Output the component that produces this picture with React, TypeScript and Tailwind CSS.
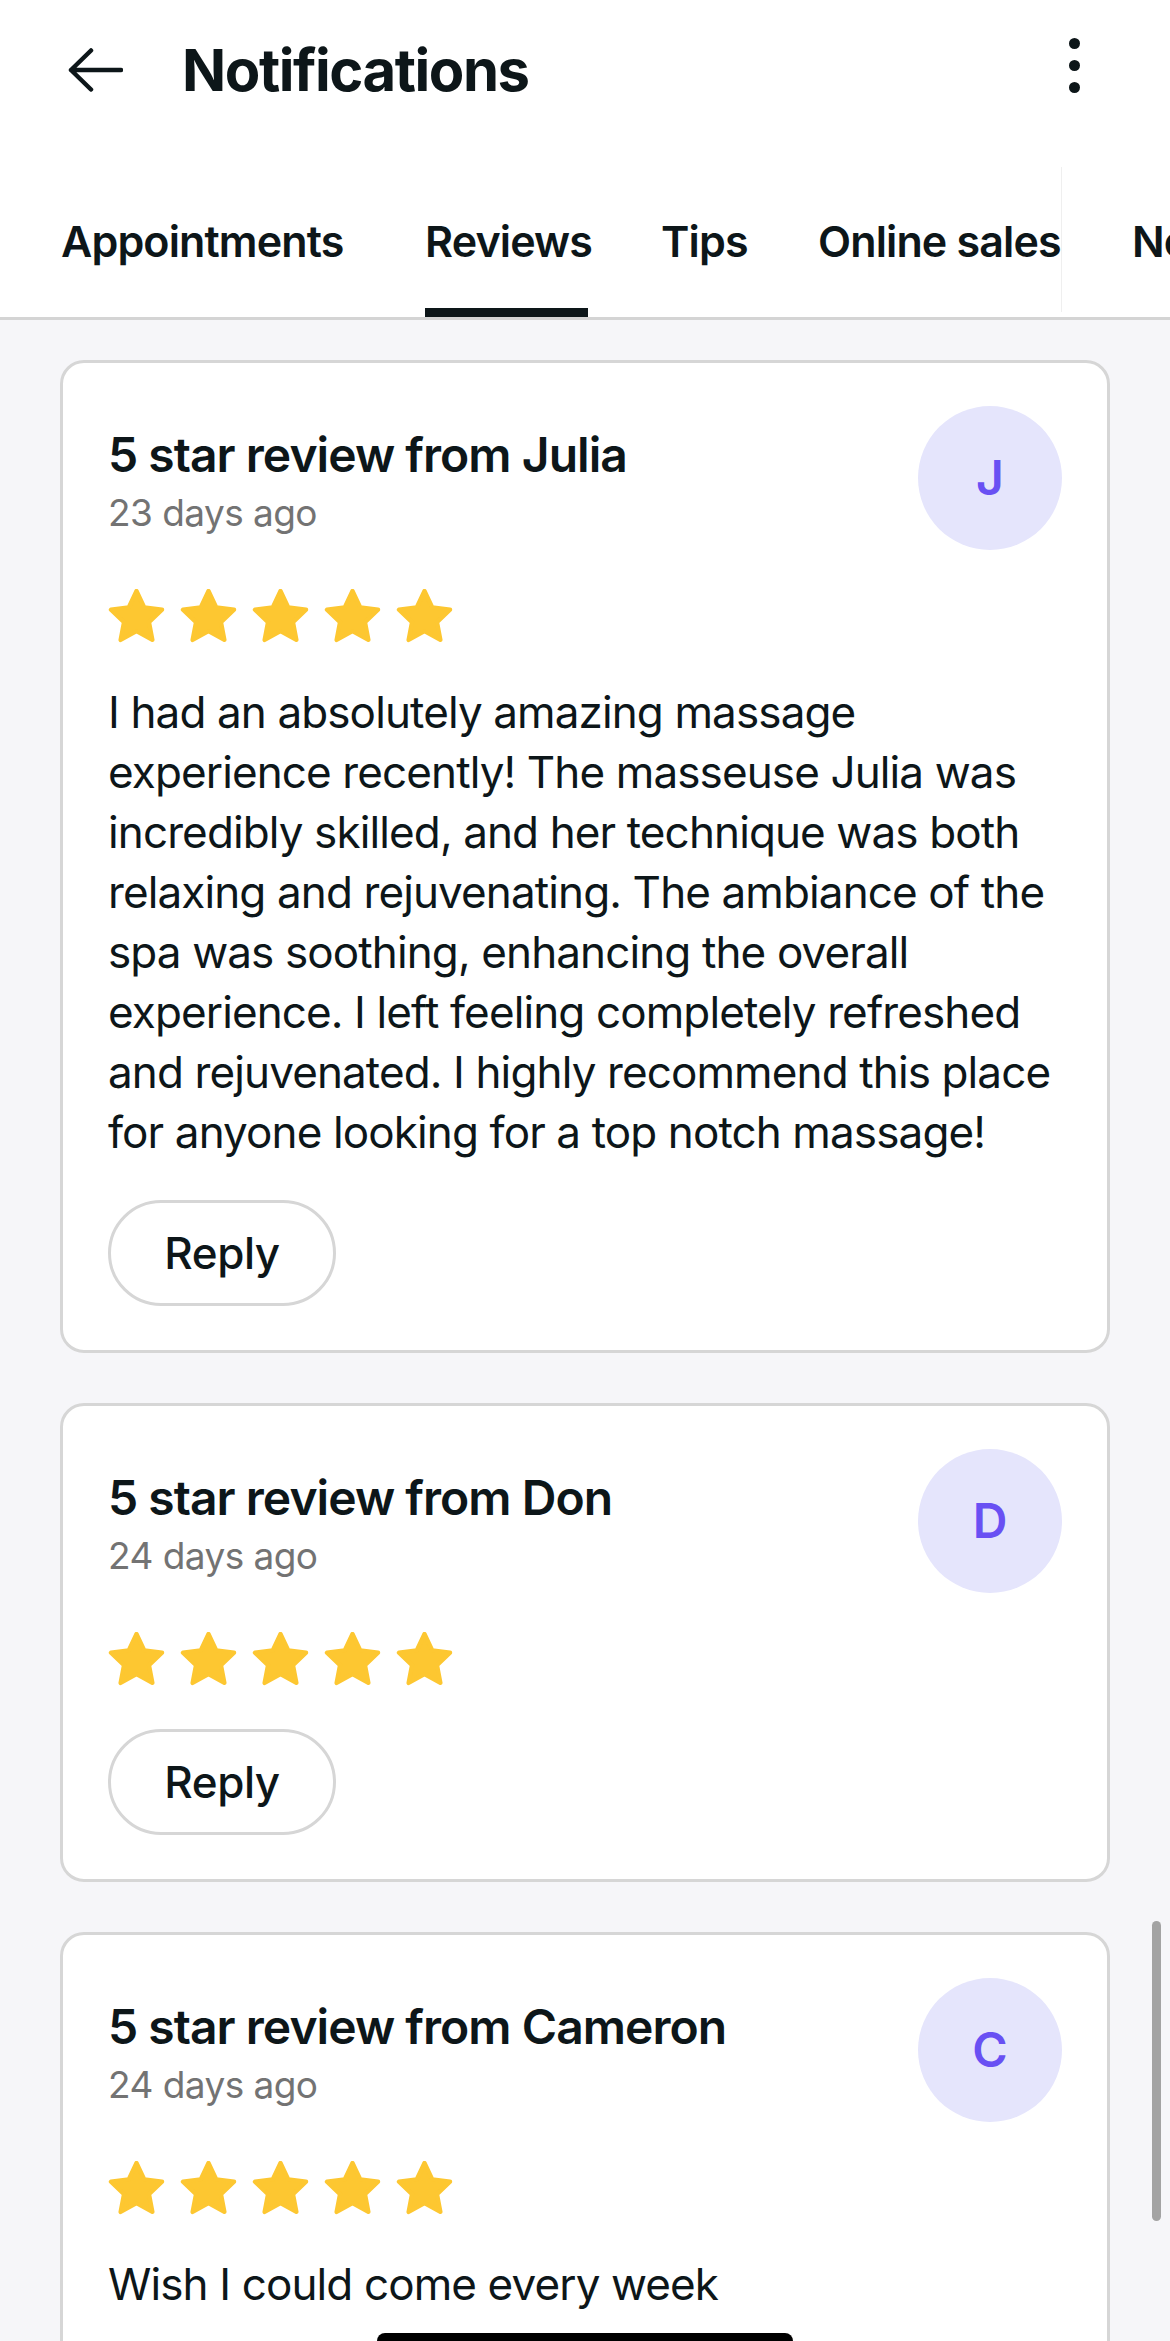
import { ReactNode } from "react";

interface Review {
  name: string;
  initial: string;
  ago: string;
  lines?: string[];
}

const reviews: Review[] = [
  {
    name: "Julia",
    initial: "J",
    ago: "23 days ago",
    lines: [
      "I had an absolutely amazing massage",
      "experience recently! The masseuse Julia was",
      "incredibly skilled, and her technique was both",
      "relaxing and rejuvenating. The ambiance of the",
      "spa was soothing, enhancing the overall",
      "experience. I left feeling completely refreshed",
      "and rejuvenated. I highly recommend this place",
      "for anyone looking for a top notch massage!",
    ],
  },
  { name: "Don", initial: "D", ago: "24 days ago" },
  {
    name: "Cameron",
    initial: "C",
    ago: "24 days ago",
    lines: ["Wish I could come every week"],
  },
];

const tabs = [
  { label: "Appointments", width: "w-[291px]" },
  { label: "Reviews", width: "w-[163px]", active: true },
  { label: "Tips", width: "w-[84px]" },
  { label: "Online sales", width: "w-[241px]" },
  { label: "Notes", width: "w-[140px]" },
];

const Star = () => (
  <svg viewBox="1.5 1.9 21 19.8" className="h-[54px] w-[57px]">
    <path
      d="M12 2.6l2.85 6.05 6.55.85-4.8 4.55 1.25 6.55L12 17.4l-5.85 3.2 1.25-6.55-4.8-4.55 6.55-.85z"
      fill="#fdc731"
      stroke="#fdc731"
      strokeWidth="1.6"
      strokeLinejoin="round"
    />
  </svg>
);

const Card = ({ review, children }: { review: Review; children?: ReactNode }) => (
  <div className="rounded-[24px] border-[3px] border-[#d6d6d6] bg-white px-[45px] pt-[43px] pb-[44px]">
    <div className="flex items-start justify-between">
      <div className="mt-[20px] flex flex-col">
        <div className="text-[48px] font-semibold leading-[58px] tracking-[-0.02em]">
          5 star review from {review.name}
        </div>
        <div className="mt-[6px] text-[37px] leading-[46px] tracking-[-0.015em] text-[#737373]">
          {review.ago}
        </div>
      </div>
      <div className="flex h-[144px] w-[144px] items-center justify-center rounded-full bg-[#e5e5fc] text-[48px] font-semibold text-[#6950f3]">
        {review.initial}
      </div>
    </div>

    <div className="mt-[39px] flex gap-[15px]">
      {[0, 1, 2, 3, 4].map((i) => (
        <Star key={i} />
      ))}
    </div>

    {review.lines && (
      <p className="mt-[39px] text-[44px] leading-[60px] tracking-[-0.02em]">
        {review.lines.map((line, i) => (
          <span key={i} className="block">
            {line}
          </span>
        ))}
      </p>
    )}

    <button
      className={`${review.lines ? "mt-[38px]" : "mt-[43px]"} flex h-[106px] w-[228px] items-center justify-center rounded-full border-[3px] border-[#d6d6d6] text-[44px] font-medium tracking-[-0.01em]`}
    >
      Reply
    </button>
    {children}
  </div>
);

export default function App() {
  return (
    <div className="relative h-[2341px] w-[1170px] overflow-hidden bg-[#f6f6f9] font-['Inter',_'Roboto',_sans-serif] text-[#0d1619]">
      <header className="bg-white">
        <div className="flex h-[140px] items-center pl-[68px] pr-[90px]">
          <svg viewBox="0 0 55 44" className="h-[44px] w-[55px]" fill="none">
            <path
              d="M53 22H3M23 2.5L3 22l20 19.5"
              stroke="#0d1619"
              strokeWidth="4.5"
              strokeLinecap="round"
              strokeLinejoin="round"
            />
          </svg>
          <h1 className="ml-[59px] text-[58px] font-bold leading-[72px] tracking-[-0.025em]">
            Notifications
          </h1>
          <div className="ml-auto flex -translate-y-[5px] flex-col gap-[11px]">
            <span className="h-[11px] w-[11px] rounded-full bg-[#0d1619]" />
            <span className="h-[11px] w-[11px] rounded-full bg-[#0d1619]" />
            <span className="h-[11px] w-[11px] rounded-full bg-[#0d1619]" />
          </div>
        </div>

        <nav className="relative flex h-[180px] gap-[73px] overflow-hidden border-b-[3px] border-[#d4d4d4] pl-[61px]">
          {tabs.map((tab) => (
            <div key={tab.label} className={`flex shrink-0 flex-col pt-[74px] ${tab.width}`}>
              <span className="whitespace-nowrap text-[43px] font-semibold leading-[54px] tracking-[-0.02em]">
                {tab.label}
              </span>
              <span
                className={`mt-[40px] h-[9px] w-full ${tab.active ? "bg-[#0d1619]" : "bg-transparent"}`}
              />
            </div>
          ))}
          <span className="absolute left-[1061px] top-[27px] h-[145px] w-px bg-[#efefef]" />
        </nav>
      </header>

      <main className="flex flex-col gap-[50px] px-[60px] pt-[40px]">
        {reviews.map((r) => (
          <Card key={r.name} review={r} />
        ))}
      </main>

      <div className="absolute left-[1152px] top-[1921px] h-[300px] w-[9px] rounded-full bg-[#a3a3a3]" />
      <div className="absolute left-[377px] top-[2333px] h-[16px] w-[416px] rounded-full bg-black" />
    </div>
  );
}
